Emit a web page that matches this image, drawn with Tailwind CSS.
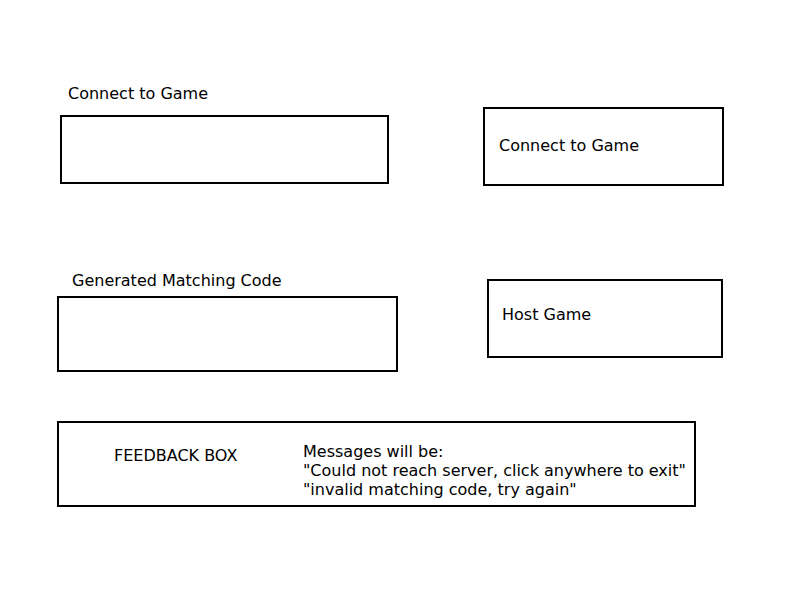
<!DOCTYPE html>
<html lang="en">
<head>
<meta charset="utf-8">
<meta name="viewport" content="width=device-width, initial-scale=1">
<title>Connect to Game</title>
<script src="https://cdn.jsdelivr.net/npm/@tailwindcss/browser@4"></script>
</head>
<body class="bg-white text-black text-[16px] leading-[19px] font-['DejaVu_Sans',sans-serif]">
<main class="pt-[84px] pb-8 pl-[57px] pr-[76px]">
  <section class="flex items-start justify-between gap-6 pl-[3px]">
    <div class="flex w-[329px] flex-col gap-[12px]">
      <label for="join" class="pl-[8px]">Connect to Game</label>
      <input id="join" type="text" class="h-[69px] w-full border-2 border-black px-3 outline-none">
    </div>
    <button type="button" class="mt-[23px] h-[79px] w-[241px] border-2 border-black px-[14px] pb-[2px] text-left">Connect to Game</button>
  </section>
  <section class="mt-[85px] flex items-start justify-between gap-6 pr-px">
    <div class="flex w-[341px] flex-col gap-[6px]">
      <label for="code" class="pl-[15px]">Generated Matching Code</label>
      <input id="code" type="text" readonly class="h-[76px] w-full border-2 border-black px-3 outline-none">
    </div>
    <button type="button" class="mt-[8px] flex h-[79px] w-[236px] items-start border-2 border-black px-[13px] pt-[24px] text-left">Host Game</button>
  </section>
  <section role="status" class="mt-[49px] mr-[28px] flex border-2 border-black pt-[19px] pb-[6px] pl-[55px]">
    <h2 class="w-[189px] shrink-0 pt-[4px]">FEEDBACK BOX</h2>
    <div class="whitespace-nowrap">
      <p>Messages will be:</p>
      <p>"Could not reach server, click anywhere to exit"</p>
      <p>"invalid matching code, try again"</p>
    </div>
  </section>
</main>
</body>
</html>
